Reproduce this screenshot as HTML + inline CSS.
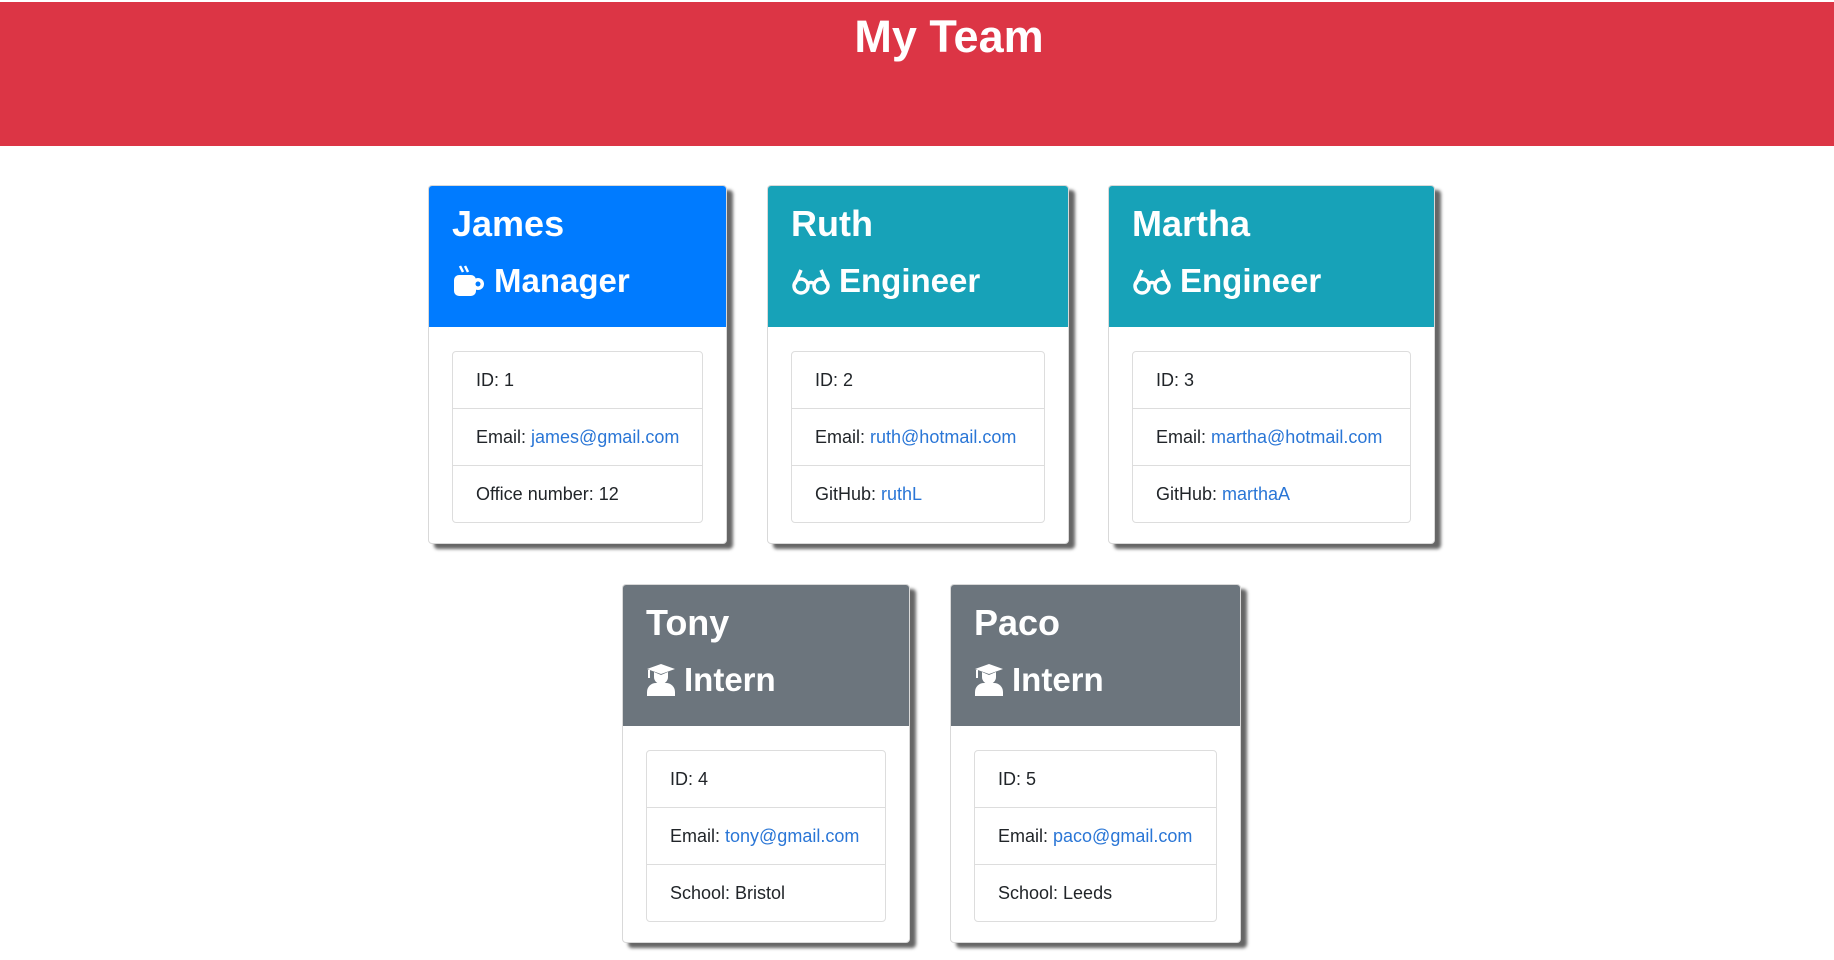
<!DOCTYPE html>
<html><head><style>
body{margin:0;width:1834px;height:960px;background:#fff;font-family:"Liberation Sans",sans-serif;position:relative;overflow:hidden}
.hdr{position:absolute;left:0;top:2px;width:1834px;height:144px;background:#dc3545;color:#fff;text-align:center;font-size:45px;font-weight:bold;line-height:70px;padding-left:64px;box-sizing:border-box}
.card{position:absolute;background:#fff;border:1px solid rgba(0,0,0,.15);border-radius:4px;box-shadow:6px 5px 3px #666;box-sizing:border-box;overflow:hidden}
.ch{height:141px;color:#fff;padding:17px 23px 0;box-sizing:border-box}
.ch .n{font-size:36px;font-weight:bold;line-height:42px}
.ch .r{font-size:33px;font-weight:bold;line-height:42px;margin-top:15px;display:flex;align-items:center;gap:8px}
.ul{margin:24px 23px;border:1px solid #ddd;border-radius:4px}
.li{height:56px;line-height:56px;padding:0 23px;font-size:18px;color:#212529;border-top:1px solid #ddd;white-space:nowrap}
.li:first-child{border-top:none}
.li a{text-decoration:none;color:#2a76d6}
</style></head><body>
<div class="hdr">My Team</div>

<div class="card" style="left:428px;top:185px;width:299px;height:359px">
<div class="ch" style="background:#007bff"><div class="n">James</div><div class="r"><svg width="34" height="34" viewBox="0 0 34 34"><path d="M8 2l3 6M13 2l3 6" stroke="#fff" stroke-width="2.5"/><rect x="2" y="11" width="22" height="21" rx="5" fill="#fff"/><circle cx="26" cy="20" r="6" fill="#fff"/><circle cx="26" cy="20" r="2.5" fill="#007bff"/></svg>Manager</div></div>
<div class="ul"><div class="li">ID: 1</div><div class="li">Email: <a>james@gmail.com</a></div><div class="li">Office number: 12</div></div></div>

<div class="card" style="left:767px;top:185px;width:302px;height:359px">
<div class="ch" style="background:#17a2b8"><div class="n">Ruth</div><div class="r"><svg width="40" height="30" viewBox="0 0 40 30"><g fill="none" stroke="#fff" stroke-width="3.5"><circle cx="10" cy="20" r="7"/><circle cx="30" cy="20" r="7"/><path d="M16 18q4-3 8 0M4 18L10 4M36 18L30 4"/></g></svg>Engineer</div></div>
<div class="ul"><div class="li">ID: 2</div><div class="li">Email: <a>ruth@hotmail.com</a></div><div class="li">GitHub: <a>ruthL</a></div></div></div>

<div class="card" style="left:1108px;top:185px;width:327px;height:359px">
<div class="ch" style="background:#17a2b8"><div class="n">Martha</div><div class="r"><svg width="40" height="30" viewBox="0 0 40 30"><g fill="none" stroke="#fff" stroke-width="3.5"><circle cx="10" cy="20" r="7"/><circle cx="30" cy="20" r="7"/><path d="M16 18q4-3 8 0M4 18L10 4M36 18L30 4"/></g></svg>Engineer</div></div>
<div class="ul"><div class="li">ID: 3</div><div class="li">Email: <a>martha@hotmail.com</a></div><div class="li">GitHub: <a>marthaA</a></div></div></div>

<div class="card" style="left:622px;top:584px;width:288px;height:359px">
<div class="ch" style="background:#6c757d"><div class="n">Tony</div><div class="r"><svg width="30" height="34" viewBox="0 0 30 34"><path d="M1 6L15 1l14 5-14 5z" fill="#fff"/><path d="M8 9v5a7 7 0 0014 0V9l-7 3z" fill="#fff"/><path d="M3 7v8" stroke="#fff" stroke-width="2"/><path d="M1 33v-4a9 9 0 019-9h10a9 9 0 019 9v4z" fill="#fff"/></svg>Intern</div></div>
<div class="ul"><div class="li">ID: 4</div><div class="li">Email: <a>tony@gmail.com</a></div><div class="li">School: Bristol</div></div></div>

<div class="card" style="left:950px;top:584px;width:291px;height:359px">
<div class="ch" style="background:#6c757d"><div class="n">Paco</div><div class="r"><svg width="30" height="34" viewBox="0 0 30 34"><path d="M1 6L15 1l14 5-14 5z" fill="#fff"/><path d="M8 9v5a7 7 0 0014 0V9l-7 3z" fill="#fff"/><path d="M3 7v8" stroke="#fff" stroke-width="2"/><path d="M1 33v-4a9 9 0 019-9h10a9 9 0 019 9v4z" fill="#fff"/></svg>Intern</div></div>
<div class="ul"><div class="li">ID: 5</div><div class="li">Email: <a>paco@gmail.com</a></div><div class="li">School: Leeds</div></div></div>
</body></html>
